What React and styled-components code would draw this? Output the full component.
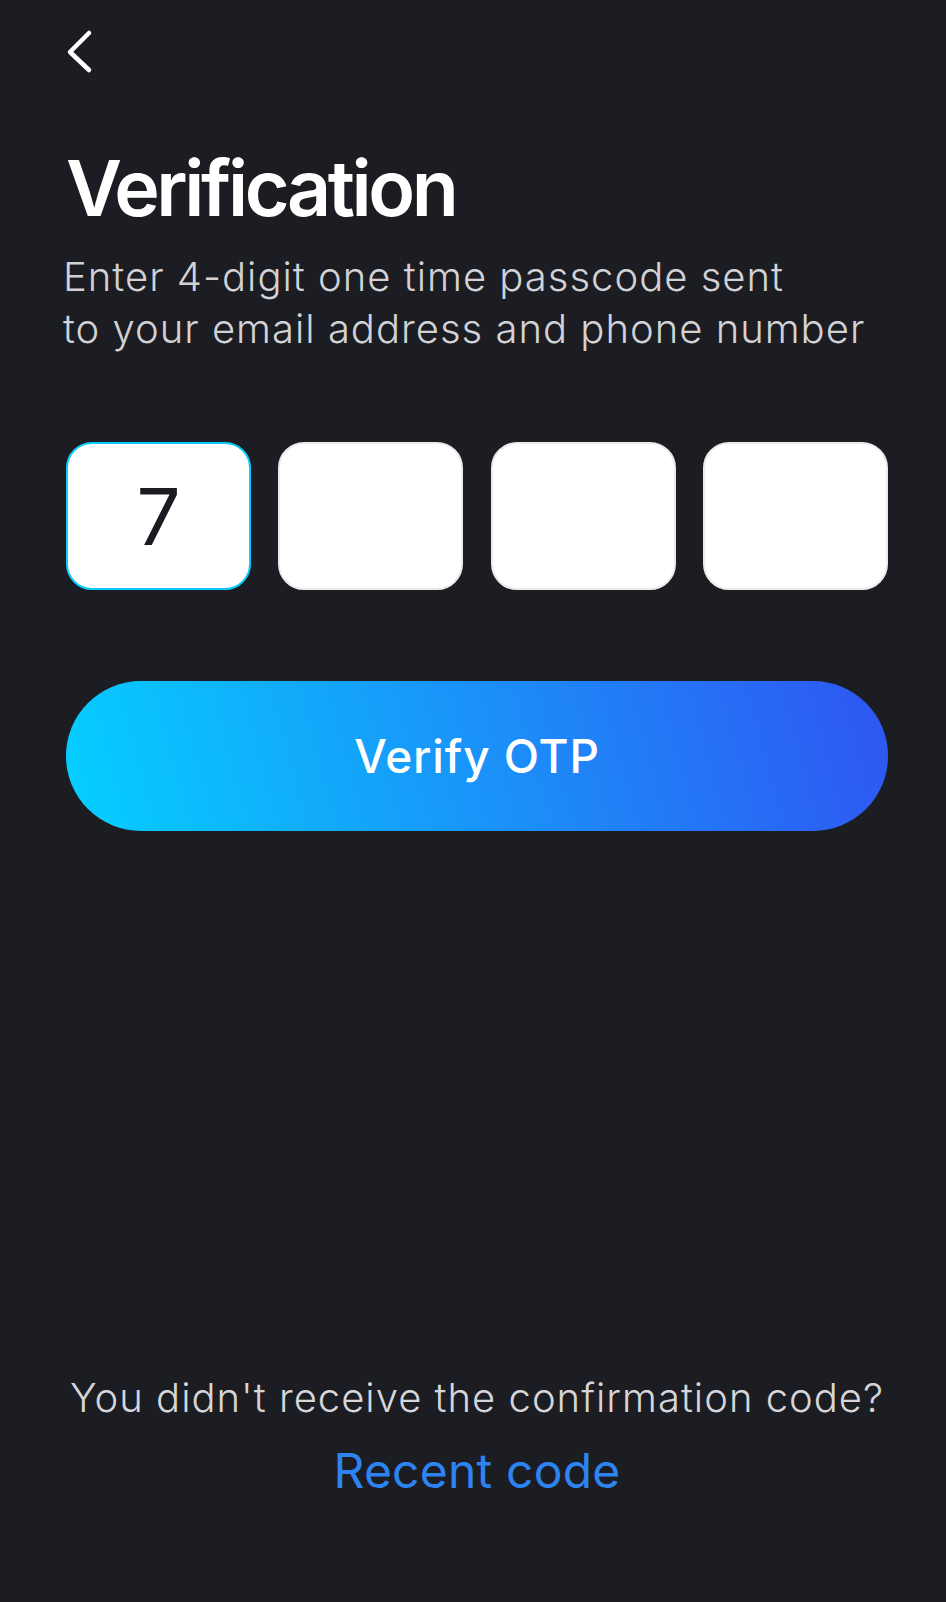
import React from 'react';
import styled, { createGlobalStyle } from 'styled-components';

const GlobalStyle = createGlobalStyle`
  html, body {
    margin: 0;
    padding: 0;
    background: #1c1d22;
  }
  * {
    box-sizing: border-box;
  }
`;

const Page = styled.div`
  display: flex;
  flex-direction: column;
  min-height: 100vh;
  padding: 0 58px 0 66px;
  background: #1c1d22;
  font-family: Inter, "Noto Sans", sans-serif;
  color: #ffffff;
`;

const BackButton = styled.button`
  display: flex;
  align-items: center;
  justify-content: flex-start;
  width: 40px;
  height: 46px;
  margin-top: 28px;
  padding: 0;
  border: none;
  background: transparent;
  cursor: pointer;
`;

const Title = styled.h1`
  margin: 67px 0 0;
  font-size: 77px;
  line-height: 94px;
  font-weight: 600;
  letter-spacing: -3.4px;
  color: #ffffff;
`;

const Subtitle = styled.p`
  margin: 16px 0 0 -3px;
  font-size: 40px;
  line-height: 52px;
  font-weight: 300;
  letter-spacing: 1px;
  color: #d2d2d6;
`;

const CodeRow = styled.div`
  display: flex;
  justify-content: space-between;
  margin-top: 87px;
`;

const CodeBox = styled.div`
  display: flex;
  align-items: center;
  justify-content: center;
  width: 185px;
  height: 148px;
  border-radius: 26px;
  background: #ffffff;
  border: 2px solid ${p => (p.$active ? '#08cdfc' : '#ebebeb')};
  font-size: 78px;
  font-weight: 400;
  color: #1b1c21;
`;

const VerifyButton = styled.button`
  display: flex;
  align-items: center;
  justify-content: center;
  height: 150px;
  margin-top: 91px;
  border: none;
  border-radius: 75px;
  background: linear-gradient(75deg, #05d0ff 0%, #2f55f2 100%);
  font-family: Inter, "Noto Sans", sans-serif;
  font-size: 46px;
  font-weight: 500;
  letter-spacing: 0.9px;
  color: #ffffff;
  cursor: pointer;
`;

const Spacer = styled.div`
  flex: 1;
`;

const Footer = styled.div`
  display: flex;
  flex-direction: column;
  align-items: center;
  gap: 17px;
  margin-bottom: 101px;
`;

const Question = styled.div`
  font-size: 40px;
  line-height: 52px;
  font-weight: 300;
  letter-spacing: 1px;
  color: #d6d6da;
`;

const ResendLink = styled.a`
  font-size: 48px;
  line-height: 60px;
  font-weight: 400;
  letter-spacing: 0.2px;
  color: #2d84f1;
  text-decoration: none;
  cursor: pointer;
`;

const ChevronLeft = () => (
  <svg width="30" height="46" viewBox="0 0 30 46" fill="none">
    <path d="M23 5 L4 24 L23 42" stroke="#ffffff" strokeWidth="4.5" strokeLinecap="round" strokeLinejoin="round" />
  </svg>
);

const digits = ['7', '', '', ''];

const App = () => {
  return (
    <>
      <GlobalStyle />
      <Page>
        <BackButton aria-label="Back">
          <ChevronLeft />
        </BackButton>
        <Title>Verification</Title>
        <Subtitle>
          Enter 4-digit one time passcode sent
          <br />
          to your email address and phone number
        </Subtitle>
        <CodeRow>
          {digits.map((d, i) => (
            <CodeBox key={i} $active={i === 0}>{d}</CodeBox>
          ))}
        </CodeRow>
        <VerifyButton>Verify OTP</VerifyButton>
        <Spacer />
        <Footer>
          <Question>You didn't receive the confirmation code?</Question>
          <ResendLink>Recent code</ResendLink>
        </Footer>
      </Page>
    </>
  );
};

export default App;
